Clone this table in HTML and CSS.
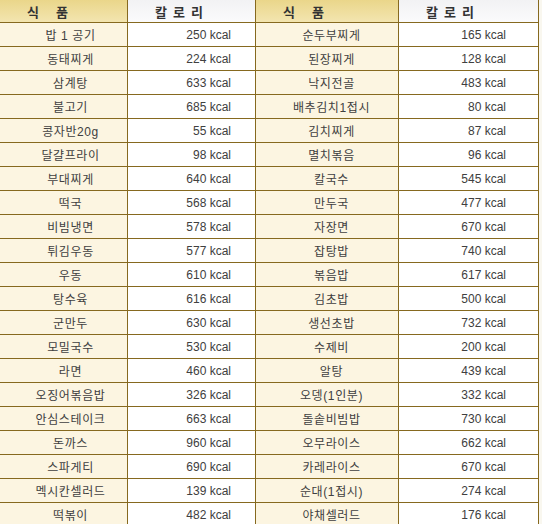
FILE: index.html
```html
<!DOCTYPE html>
<html lang="ko">
<head>
<meta charset="utf-8">
<title>음식 칼로리표</title>
<link rel="stylesheet" href="styles.css">
</head>
<body>
<div class="cal-table" role="table">
  <div class="hd hd-food" role="columnheader"><span>식</span><span>품</span></div>
  <div class="hd hd-kcal" role="columnheader"><span>칼</span><span>로</span><span>리</span></div>
  <div class="hd hd-food" role="columnheader"><span>식</span><span>품</span></div>
  <div class="hd hd-kcal" role="columnheader"><span>칼</span><span>로</span><span>리</span></div>

  <div class="food c1">밥 1 공기</div><div class="kcal c2">250 kcal</div><div class="food c3">순두부찌게</div><div class="kcal c4">165 kcal</div>
  <div class="food c1">동태찌게</div><div class="kcal c2">224 kcal</div><div class="food c3">된장찌게</div><div class="kcal c4">128 kcal</div>
  <div class="food c1">삼계탕</div><div class="kcal c2">633 kcal</div><div class="food c3">낙지전골</div><div class="kcal c4">483 kcal</div>
  <div class="food c1">불고기</div><div class="kcal c2">685 kcal</div><div class="food c3">배추김치1접시</div><div class="kcal c4">80 kcal</div>
  <div class="food c1">콩자반20g</div><div class="kcal c2">55 kcal</div><div class="food c3">김치찌게</div><div class="kcal c4">87 kcal</div>
  <div class="food c1">달걀프라이</div><div class="kcal c2">98 kcal</div><div class="food c3">멸치볶음</div><div class="kcal c4">96 kcal</div>
  <div class="food c1">부대찌게</div><div class="kcal c2">640 kcal</div><div class="food c3">칼국수</div><div class="kcal c4">545 kcal</div>
  <div class="food c1">떡국</div><div class="kcal c2">568 kcal</div><div class="food c3">만두국</div><div class="kcal c4">477 kcal</div>
  <div class="food c1">비빔냉면</div><div class="kcal c2">578 kcal</div><div class="food c3">자장면</div><div class="kcal c4">670 kcal</div>
  <div class="food c1">튀김우동</div><div class="kcal c2">577 kcal</div><div class="food c3">잡탕밥</div><div class="kcal c4">740 kcal</div>
  <div class="food c1">우동</div><div class="kcal c2">610 kcal</div><div class="food c3">볶음밥</div><div class="kcal c4">617 kcal</div>
  <div class="food c1">탕수육</div><div class="kcal c2">616 kcal</div><div class="food c3">김초밥</div><div class="kcal c4">500 kcal</div>
  <div class="food c1">군만두</div><div class="kcal c2">630 kcal</div><div class="food c3">생선초밥</div><div class="kcal c4">732 kcal</div>
  <div class="food c1">모밀국수</div><div class="kcal c2">530 kcal</div><div class="food c3">수제비</div><div class="kcal c4">200 kcal</div>
  <div class="food c1">라면</div><div class="kcal c2">460 kcal</div><div class="food c3">알탕</div><div class="kcal c4">439 kcal</div>
  <div class="food c1">오징어볶음밥</div><div class="kcal c2">326 kcal</div><div class="food c3">오뎅(1인분)</div><div class="kcal c4">332 kcal</div>
  <div class="food c1">안심스테이크</div><div class="kcal c2">663 kcal</div><div class="food c3">돌솥비빔밥</div><div class="kcal c4">730 kcal</div>
  <div class="food c1">돈까스</div><div class="kcal c2">960 kcal</div><div class="food c3">오무라이스</div><div class="kcal c4">662 kcal</div>
  <div class="food c1">스파게티</div><div class="kcal c2">690 kcal</div><div class="food c3">카레라이스</div><div class="kcal c4">670 kcal</div>
  <div class="food c1">멕시칸셀러드</div><div class="kcal c2">139 kcal</div><div class="food c3">순대(1접시)</div><div class="kcal c4">274 kcal</div>
  <div class="food c1">떡볶이</div><div class="kcal c2">482 kcal</div><div class="food c3">야채셀러드</div><div class="kcal c4">176 kcal</div>
</div>
</body>
</html>
```
FILE: styles.css
```css
html, body {
  margin: 0;
  padding: 0;
}
body {
  background: #f9f7ef;
  font-family: "Liberation Sans", "Noto Sans CJK KR", sans-serif;
  font-size: 12px;
  color: #404040;
}
.cal-table {
  display: grid;
  grid-template-columns: 127px 127px 142px 139px;
  grid-template-rows: 22px;
  grid-auto-rows: 23px;
  gap: 1px;
  padding: 0 1px 1px 0;
  width: max-content;
  background: #86691f;
}
.hd {
  display: flex;
  align-items: center;
  padding-left: 27px;
  font-size: 13px;
  font-weight: bold;
  color: #333;
}
.hd-food {
  gap: 17px;
  background: linear-gradient(to bottom, #ead68a, #f3e5b0);
}
.hd-kcal {
  gap: 6px;
  background: linear-gradient(to bottom, #f2f2f4, #fbfbfc);
}
.food, .kcal {
  display: flex;
  align-items: center;
  white-space: nowrap;
}
.food {
  justify-content: center;
  letter-spacing: 0.6px;
  background: #fcf5e1;
}
.kcal {
  justify-content: flex-end;
  background: #ffffff;
}
.c1 { padding-left: 14px; }
.c3 { padding-left: 9px; }
.c2 { padding-right: 24px; }
.c4 { padding-right: 32px; }
```
